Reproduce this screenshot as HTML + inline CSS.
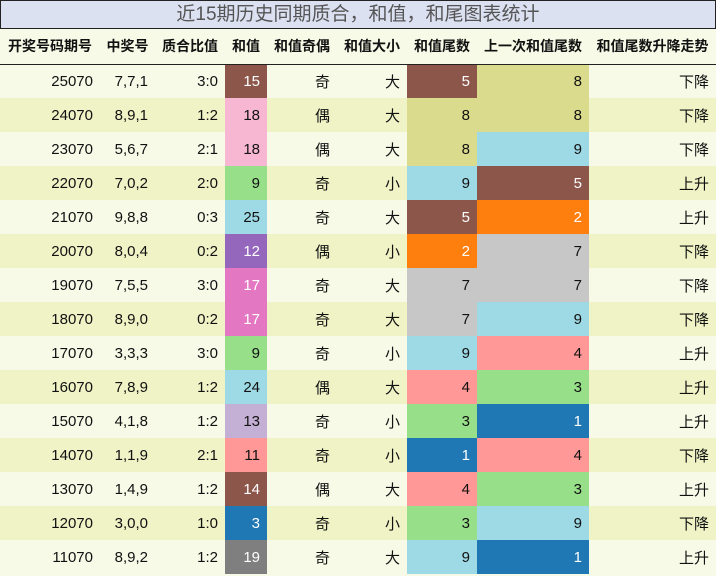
<!DOCTYPE html>
<html><head><meta charset="utf-8"><style>
*{margin:0;padding:0;box-sizing:border-box}
body{width:716px;height:576px;overflow:hidden;background:#f8fae8;font-family:"Liberation Sans","Noto Sans CJK SC",sans-serif;color:#111}
.title{position:absolute;left:0;top:0;width:716px;height:29px;background:#dce1f2;border:1.5px solid #222;font-size:19px;color:#555;text-align:center;line-height:27px;padding-left:0}
table{position:absolute;left:0;top:29px;border-collapse:collapse;table-layout:fixed;width:716px}
th{height:35px;font-size:14px;font-weight:bold;border-bottom:1.5px solid #222;background:#f8fae8;text-align:center;white-space:nowrap;padding:0}
td{height:34px;font-size:15px;padding:0 7px;text-align:right;white-space:nowrap}
tr.o td{background:#f8fae8} tr.e td{background:#eff3c6}
td.w{color:#fff}
</style></head><body>
<div class="title">近15期历史同期质合，和值，和尾图表统计</div>
<table>
<colgroup><col style="width:100px"><col style="width:55px"><col style="width:70px"><col style="width:42px"><col style="width:70px"><col style="width:70px"><col style="width:70px"><col style="width:112px"><col style="width:127px"></colgroup>
<tr><th>开奖号码期号</th><th>中奖号</th><th>质合比值</th><th>和值</th><th>和值奇偶</th><th>和值大小</th><th>和值尾数</th><th>上一次和值尾数</th><th>和值尾数升降走势</th></tr>
<tr class="o"><td>25070</td><td>7,7,1</td><td>3:0</td><td class="w" style="background:#8c564b">15</td><td>奇</td><td>大</td><td class="w" style="background:#8c564b">5</td><td style="background:#dbdb8d">8</td><td>下降</td></tr>
<tr class="e"><td>24070</td><td>8,9,1</td><td>1:2</td><td style="background:#f7b6d2">18</td><td>偶</td><td>大</td><td style="background:#dbdb8d">8</td><td style="background:#dbdb8d">8</td><td>下降</td></tr>
<tr class="o"><td>23070</td><td>5,6,7</td><td>2:1</td><td style="background:#f7b6d2">18</td><td>偶</td><td>大</td><td style="background:#dbdb8d">8</td><td style="background:#9edae5">9</td><td>下降</td></tr>
<tr class="e"><td>22070</td><td>7,0,2</td><td>2:0</td><td style="background:#98df8a">9</td><td>奇</td><td>小</td><td style="background:#9edae5">9</td><td class="w" style="background:#8c564b">5</td><td>上升</td></tr>
<tr class="o"><td>21070</td><td>9,8,8</td><td>0:3</td><td style="background:#9edae5">25</td><td>奇</td><td>大</td><td class="w" style="background:#8c564b">5</td><td class="w" style="background:#ff7f0e">2</td><td>上升</td></tr>
<tr class="e"><td>20070</td><td>8,0,4</td><td>0:2</td><td class="w" style="background:#9467bd">12</td><td>偶</td><td>小</td><td class="w" style="background:#ff7f0e">2</td><td style="background:#c7c7c7">7</td><td>下降</td></tr>
<tr class="o"><td>19070</td><td>7,5,5</td><td>3:0</td><td class="w" style="background:#e377c2">17</td><td>奇</td><td>大</td><td style="background:#c7c7c7">7</td><td style="background:#c7c7c7">7</td><td>下降</td></tr>
<tr class="e"><td>18070</td><td>8,9,0</td><td>0:2</td><td class="w" style="background:#e377c2">17</td><td>奇</td><td>大</td><td style="background:#c7c7c7">7</td><td style="background:#9edae5">9</td><td>下降</td></tr>
<tr class="o"><td>17070</td><td>3,3,3</td><td>3:0</td><td style="background:#98df8a">9</td><td>奇</td><td>小</td><td style="background:#9edae5">9</td><td style="background:#ff9896">4</td><td>上升</td></tr>
<tr class="e"><td>16070</td><td>7,8,9</td><td>1:2</td><td style="background:#9edae5">24</td><td>偶</td><td>大</td><td style="background:#ff9896">4</td><td style="background:#98df8a">3</td><td>上升</td></tr>
<tr class="o"><td>15070</td><td>4,1,8</td><td>1:2</td><td style="background:#c5b0d5">13</td><td>奇</td><td>小</td><td style="background:#98df8a">3</td><td class="w" style="background:#1f77b4">1</td><td>上升</td></tr>
<tr class="e"><td>14070</td><td>1,1,9</td><td>2:1</td><td style="background:#ff9896">11</td><td>奇</td><td>小</td><td class="w" style="background:#1f77b4">1</td><td style="background:#ff9896">4</td><td>下降</td></tr>
<tr class="o"><td>13070</td><td>1,4,9</td><td>1:2</td><td class="w" style="background:#8c564b">14</td><td>偶</td><td>大</td><td style="background:#ff9896">4</td><td style="background:#98df8a">3</td><td>上升</td></tr>
<tr class="e"><td>12070</td><td>3,0,0</td><td>1:0</td><td class="w" style="background:#1f77b4">3</td><td>奇</td><td>小</td><td style="background:#98df8a">3</td><td style="background:#9edae5">9</td><td>下降</td></tr>
<tr class="o"><td>11070</td><td>8,9,2</td><td>1:2</td><td class="w" style="background:#7f7f7f">19</td><td>奇</td><td>大</td><td style="background:#9edae5">9</td><td class="w" style="background:#1f77b4">1</td><td>上升</td></tr>
</table>
</body></html>
